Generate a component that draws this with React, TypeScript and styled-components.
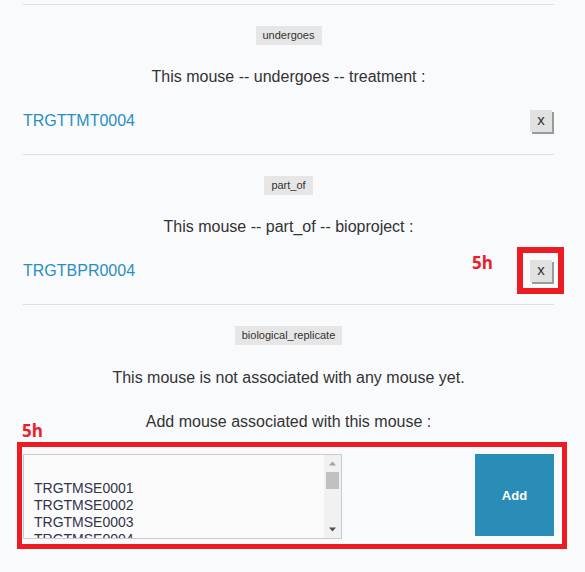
import styled, { createGlobalStyle } from "styled-components";

const GlobalStyle = createGlobalStyle`
  html, body {
    margin: 0;
    padding: 0;
    background: #f9fafc;
  }
  body {
    font-family: "Liberation Sans", Arial, sans-serif;
    color: #333333;
  }
`;

type Relation = {
  label: string;
  target: string;
  id: string;
};

const relations: Relation[] = [
  { label: "undergoes", target: "treatment", id: "TRGTTMT0004" },
  { label: "part_of", target: "bioproject", id: "TRGTBPR0004" },
];

const options = ["", "TRGTMSE0001", "TRGTMSE0002", "TRGTMSE0003", "TRGTMSE0004", "TRGTMSE0005"];

function App() {
  return (
    <>
      <GlobalStyle />
      <Page>
        {relations.map((r) => (
          <Section key={r.label}>
            <Divider />
            <BadgeWrap>
              <Badge>{r.label}</Badge>
            </BadgeWrap>
            <Heading $top={22}>
              This mouse -- {r.label} -- {r.target} :
            </Heading>
            <LinkRow>
              <IdLink href="#">{r.id}</IdLink>
              <RemoveButton>x</RemoveButton>
            </LinkRow>
          </Section>
        ))}
        <Section>
          <Divider />
          <BadgeWrap>
            <Badge>biological_replicate</Badge>
          </BadgeWrap>
          <Heading $top={23}>This mouse is not associated with any mouse yet.</Heading>
          <Heading $top={24}>Add mouse associated with this mouse :</Heading>
          <AddRow>
            <ListBox>
              <Options>
                {options.map((o, i) => (
                  <Option key={i}>{o}</Option>
                ))}
              </Options>
              <ScrollTrack>
                <Arrow viewBox="0 0 9 5" $dim>
                  <polygon points="0,5 4.5,0 9,5" />
                </Arrow>
                <Thumb />
                <TrackFill />
                <Arrow viewBox="0 0 9 5">
                  <polygon points="0,0 4.5,5 9,0" />
                </Arrow>
              </ScrollTrack>
            </ListBox>
            <AddButton>Add</AddButton>
          </AddRow>
        </Section>
      </Page>

      {/* review annotations drawn over the page */}
      <Note $x={472} $y={251}>5h</Note>
      <Mark $x={517} $y={247} $w={47} $h={47} $b={6} />
      <Note $x={22} $y={419}>5h</Note>
      <Mark $x={17} $y={442} $w={550} $h={107} $b={5} />
    </>
  );
}

export default App;

const Page = styled.div`
  width: 531px;
  padding: 4px 0 0 23px;
`;

const Section = styled.section`
  display: flex;
  flex-direction: column;
`;

const Divider = styled.div`
  height: 1px;
  background: #dedfe1;
`;

const BadgeWrap = styled.div`
  display: flex;
  justify-content: center;
  margin-top: 21px;
`;

const Badge = styled.span`
  height: 19px;
  line-height: 19px;
  padding: 0 7px;
  background: #e6e6e6;
  font-size: 11px;
  color: #333;
`;

const Heading = styled.p<{ $top: number }>`
  margin: ${(p) => p.$top}px 0 0;
  height: 20px;
  line-height: 20px;
  font-size: 16px;
  text-align: center;
  color: #333;
`;

const LinkRow = styled.div`
  display: flex;
  align-items: center;
  justify-content: space-between;
  margin: 23px 0 22px;
  height: 22px;
`;

const IdLink = styled.a`
  font-size: 16px;
  color: #2a8ec0;
  text-decoration: none;
`;

const RemoveButton = styled.button`
  width: 22px;
  height: 22px;
  margin-right: 2px;
  padding: 0 0 3px;
  border: none;
  background: #e1e1e1;
  box-shadow: 2px 2px 0 #9a9a9a;
  font-family: "Liberation Sans", Arial, sans-serif;
  font-size: 15px;
  color: #333;
  cursor: pointer;
`;

const AddRow = styled.div`
  display: flex;
  justify-content: space-between;
  align-items: flex-start;
  margin-top: 22px;
`;

const ListBox = styled.div`
  display: flex;
  width: 317px;
  height: 83px;
  border: 1px solid #cbcbcb;
  background: #fbfbfb;
  overflow: hidden;
`;

const Options = styled.div`
  flex: 1;
  padding: 8px 0 0 10px;
`;

const Option = styled.div`
  height: 17px;
  line-height: 17px;
  font-size: 14px;
  color: #33334a;
  white-space: nowrap;
`;

const ScrollTrack = styled.div`
  width: 17px;
  display: flex;
  flex-direction: column;
  align-items: center;
  background: #f1f1f1;
`;

const Arrow = styled.svg<{ $dim?: boolean }>`
  width: 7px;
  height: 5px;
  margin: 6px 0;
  fill: ${(p) => (p.$dim ? "#a3a3a3" : "#505050")};
`;

const Thumb = styled.div`
  width: 13px;
  height: 17px;
  background: #c1c1c1;
`;

const TrackFill = styled.div`
  flex: 1;
`;

const AddButton = styled.button`
  width: 79px;
  height: 82px;
  border: none;
  background: #2a8db8;
  color: #ffffff;
  font-family: "Liberation Sans", Arial, sans-serif;
  font-size: 13px;
  font-weight: 700;
  cursor: pointer;
`;

const Note = styled.span<{ $x: number; $y: number }>`
  position: absolute;
  left: ${(p) => p.$x}px;
  top: ${(p) => p.$y}px;
  font-family: "Open Sans", "Noto Sans", sans-serif;
  font-size: 17px;
  font-weight: 700;
  color: #e8202a;
`;

const Mark = styled.div<{ $x: number; $y: number; $w: number; $h: number; $b: number }>`
  position: absolute;
  box-sizing: border-box;
  left: ${(p) => p.$x}px;
  top: ${(p) => p.$y}px;
  width: ${(p) => p.$w}px;
  height: ${(p) => p.$h}px;
  border: ${(p) => p.$b}px solid #ec1c24;
  pointer-events: none;
`;
